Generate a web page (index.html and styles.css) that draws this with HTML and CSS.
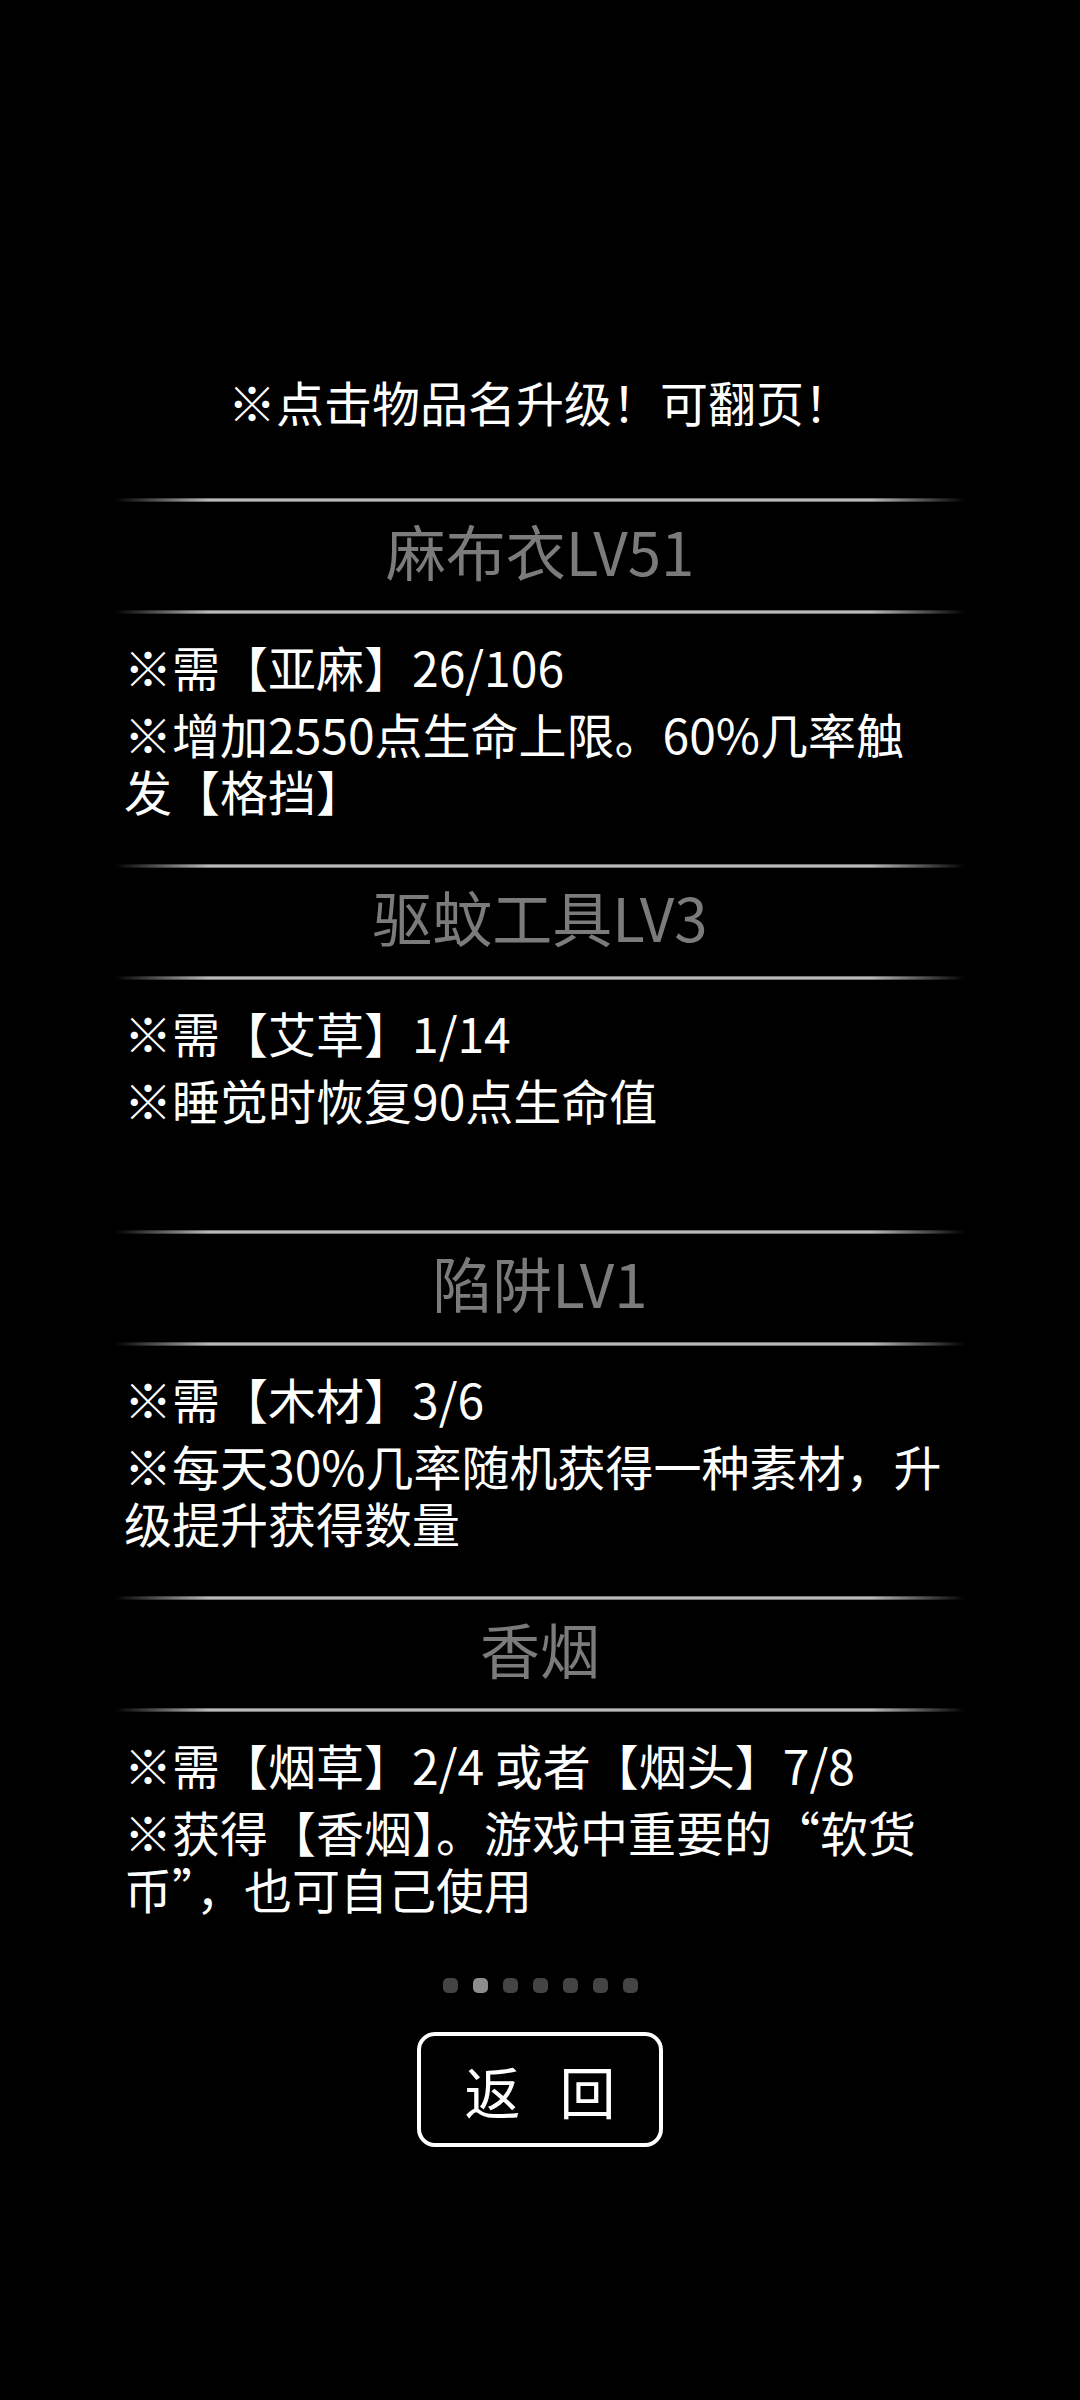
FILE: index.html
```html
<!DOCTYPE html>
<html lang="zh-CN">
<head>
  <meta charset="UTF-8" />
  <meta name="viewport" content="width=device-width, initial-scale=1.0" />
  <title>升级</title>
  <link rel="stylesheet" href="styles.css">
</head>
<body>
  <div class="page">
    <p class="tip">※点击物品名升级！可翻页！</p>

    <div class="list">
      <section class="item">
        <div class="rule"></div>
        <h2 class="name">麻布衣LV51</h2>
        <div class="rule"></div>
        <div class="desc">
          <p>※需【亚麻】26/106</p>
          <p>※增加2550点生命上限。60%几率触发【格挡】</p>
        </div>
      </section>

      <section class="item">
        <div class="rule"></div>
        <h2 class="name">驱蚊工具LV3</h2>
        <div class="rule"></div>
        <div class="desc">
          <p>※需【艾草】1/14</p>
          <p>※睡觉时恢复90点生命值</p>
        </div>
      </section>

      <section class="item">
        <div class="rule"></div>
        <h2 class="name">陷阱LV1</h2>
        <div class="rule"></div>
        <div class="desc">
          <p>※需【木材】3/6</p>
          <p>※每天30%几率随机获得一种素材，升级提升获得数量</p>
        </div>
      </section>

      <section class="item">
        <div class="rule"></div>
        <h2 class="name">香烟</h2>
        <div class="rule"></div>
        <div class="desc">
          <p>※需【烟草】2/4 或者【烟头】7/8</p>
          <p>※获得【香烟】。游戏中重要的“软货币”，也可自己使用</p>
        </div>
      </section>
    </div>

    <div class="dots">
      <span class="dot"></span>
      <span class="dot active"></span>
      <span class="dot"></span>
      <span class="dot"></span>
      <span class="dot"></span>
      <span class="dot"></span>
      <span class="dot"></span>
    </div>

    <button class="back">返回</button>
  </div>
</body>
</html>
```

FILE: styles.css
```css
* {
  box-sizing: border-box;
  margin: 0;
  padding: 0;
}

body {
  background: #000;
  color: #fff;
  font-family: "Noto Sans CJK SC", "Noto Sans", sans-serif;
  min-height: 100vh;
}

.page {
  display: flex;
  flex-direction: column;
  align-items: center;
  padding-top: 371px;
}

.tip {
  font-size: 48px;
  line-height: 60px;
  margin-bottom: 67px;
}

.list {
  width: 850px;
}

.rule {
  height: 4px;
  background:
    linear-gradient(to right, #000, rgba(0, 0, 0, 0) 11%, rgba(0, 0, 0, 0) 89%, #000),
    linear-gradient(to bottom, #5a5a5a, #d8d8d8 50%, #5a5a5a);
}

.name {
  height: 108px;
  line-height: 96px;
  padding-bottom: 12px;
  text-align: center;
  font-size: 60px;
  font-weight: 400;
  color: #7b7b7b;
}

.desc {
  height: 250px;
  padding: 24px 22px 0 9px;
  font-size: 48px;
  line-height: 57px;
}

.desc p + p {
  margin-top: 10px;
}

.dots {
  display: flex;
  gap: 15px;
  margin-top: 16px;
}

.dot {
  width: 15px;
  height: 15px;
  border-radius: 5px;
  background: #444;
}

.dot.active {
  background: #8c8c8c;
}

.back {
  margin-top: 39px;
  width: 246px;
  height: 115px;
  border: 4px solid #fff;
  border-radius: 18px;
  background: #000;
  color: #fff;
  font-family: "Noto Sans CJK SC", sans-serif;
  font-size: 56px;
  letter-spacing: 39px;
  padding-left: 39px;
  cursor: pointer;
}
```
